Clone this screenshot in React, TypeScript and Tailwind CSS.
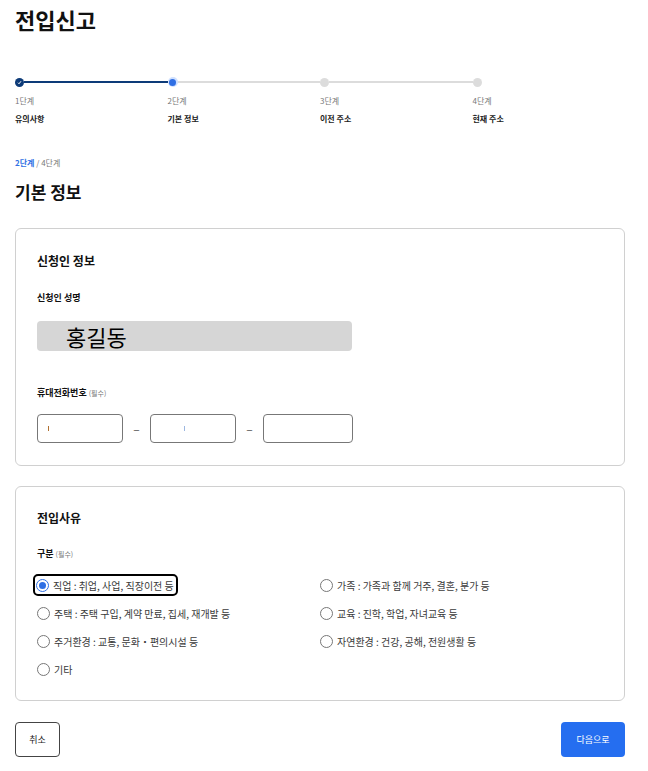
import { useState } from "react";

const FONT = { fontFamily: '"Noto Sans CJK KR", "Noto Sans", sans-serif' };

const STEPS = [
  { no: "1단계", label: "유의사항" },
  { no: "2단계", label: "기본 정보" },
  { no: "3단계", label: "이전 주소" },
  { no: "4단계", label: "현재 주소" },
];

const REASONS_LEFT = [
  "직업 : 취업, 사업, 직장이전 등",
  "주택 : 주택 구입, 계약 만료, 집세, 재개발 등",
  "주거환경 : 교통, 문화・편의시설 등",
  "기타",
];

const REASONS_RIGHT = [
  "가족 : 가족과 함께 거주, 결혼, 분가 등",
  "교육 : 진학, 학업, 자녀교육 등",
  "자연환경 : 건강, 공해, 전원생활 등",
];

function Dot({ state }: { state: "done" | "current" | "todo" }) {
  if (state === "done") {
    return (
      <span className="flex h-[9px] w-[9px] flex-none items-center justify-center rounded-full bg-[#0d3b78]">
        <svg width="5" height="5" viewBox="0 0 10 10" fill="none" stroke="#fff" strokeWidth="2">
          <path d="M2 5.5l2 2 4-5" />
        </svg>
      </span>
    );
  }
  if (state === "current") {
    return (
      <span className="flex h-[10px] w-[10px] flex-none items-center justify-center rounded-full bg-[#cfe0ff]">
        <span className="h-[7px] w-[7px] rounded-full bg-[#2f6fe4]" />
      </span>
    );
  }
  return <span className="h-[9px] w-[9px] flex-none rounded-full bg-[#dcdcdc]" />;
}

function Radio({ label, checked, onSelect }: { label: string; checked: boolean; onSelect: () => void }) {
  return (
    <button
      type="button"
      onClick={onSelect}
      className={
        "flex h-[18px] items-center gap-[4px] self-start rounded-[3px] pr-[2px] text-[10px] text-[#3a3a3a] " +
        (checked ? "-ml-[2px] pl-[1px] outline outline-2 outline-black" : "")
      }
    >
      <span
        className={
          "flex h-[13px] w-[13px] flex-none items-center justify-center rounded-full border " +
          (checked ? "border-[#2f6fe4]" : "border-[#777]")
        }
      >
        {checked ? <span className="h-[7px] w-[7px] rounded-full bg-[#2f6fe4]" /> : null}
      </span>
      {label}
    </button>
  );
}

export default function App() {
  const [reason, setReason] = useState(REASONS_LEFT[0]);

  return (
    <div className="min-h-[771px] w-[648px] bg-white text-[#111]" style={FONT}>
      <div className="pl-[15px] pr-[23px]">
        <h1 className="pt-[2px] text-[22px] font-bold leading-[34px]">전입신고</h1>

        {/* stepper */}
        <div className="mt-[41px] grid grid-cols-4">
          {STEPS.map((s, i) => (
            <div key={s.no}>
              <div className="flex h-[10px] items-center">
                <Dot state={i === 0 ? "done" : i === 1 ? "current" : "todo"} />
                {i < STEPS.length - 1 ? (
                  <span className={"h-[2px] flex-1 " + (i === 0 ? "bg-[#0d3b78]" : "bg-[#dcdcdc]")} />
                ) : null}
              </div>
              <p className="mt-[8px] text-[8px] leading-[12px] text-[#777]">{s.no}</p>
              <p className="mt-[6px] text-[8px] font-bold leading-[12px] text-[#222]">{s.label}</p>
            </div>
          ))}
        </div>

        <p className="mt-[32px] text-[8px] leading-[12px] text-[#777]">
          <span className="font-bold text-[#2f6fe4]">2단계</span> / 4단계
        </p>
        <h2 className="mt-[11px] text-[17px] font-bold leading-[24px]">기본 정보</h2>

        {/* applicant card */}
        <section className="mt-[24px] rounded-[6px] border border-[#d0d0d0] px-[21px] pb-[22px] pt-[23px]">
          <h3 className="text-[12px] font-bold leading-[18px]">신청인 정보</h3>
          <p className="mt-[21px] text-[9px] font-bold leading-[14px]">신청인 성명</p>
          <div className="mt-[16px] flex h-[30px] w-[315px] items-center rounded-[4px] bg-[#d6d6d6] pl-[29px] text-[22px] leading-none text-black">
            홍길동
          </div>
          <p className="mt-[35px] text-[9px] font-bold leading-[14px]">
            휴대전화번호 <span className="text-[7px] font-normal text-[#777]">(필수)</span>
          </p>
          <div className="mt-[14px] flex items-center">
            <div className="flex h-[29px] w-[86px] items-center rounded-[4px] border border-[#777] pl-[10px]">
              <span className="h-[5px] w-px bg-[#b07030]" />
            </div>
            <span className="w-[27px] text-center text-[12px] text-[#555]">–</span>
            <div className="flex h-[29px] w-[86px] items-center rounded-[4px] border border-[#777] pl-[33px]">
              <span className="h-[5px] w-px bg-[#9cb7e0]" />
            </div>
            <span className="w-[27px] text-center text-[12px] text-[#555]">–</span>
            <div className="h-[29px] w-[90px] rounded-[4px] border border-[#777]" />
          </div>
        </section>

        {/* reason card */}
        <section className="mt-[20px] rounded-[6px] border border-[#d0d0d0] px-[21px] pb-[22px] pt-[22px]">
          <h3 className="text-[12px] font-bold leading-[18px]">전입사유</h3>
          <p className="mt-[20px] text-[9px] font-bold leading-[14px]">
            구분 <span className="text-[7px] font-normal text-[#777]">(필수)</span>
          </p>
          <div className="mt-[15px] grid grid-cols-2">
            <div className="flex flex-col gap-[10px]">
              {REASONS_LEFT.map((r) => (
                <Radio key={r} label={r} checked={reason === r} onSelect={() => setReason(r)} />
              ))}
            </div>
            <div className="flex flex-col gap-[10px]">
              {REASONS_RIGHT.map((r) => (
                <Radio key={r} label={r} checked={reason === r} onSelect={() => setReason(r)} />
              ))}
            </div>
          </div>
        </section>

        <div className="mt-[21px] flex items-center justify-between">
          <button
            type="button"
            className="h-[35px] w-[45px] rounded-[4px] border border-[#444] text-[9px] text-[#222]"
          >
            취소
          </button>
          <button
            type="button"
            className="h-[35px] w-[64px] rounded-[4px] bg-[#256ef0] text-[9px] text-white"
          >
            다음으로
          </button>
        </div>
      </div>
    </div>
  );
}
